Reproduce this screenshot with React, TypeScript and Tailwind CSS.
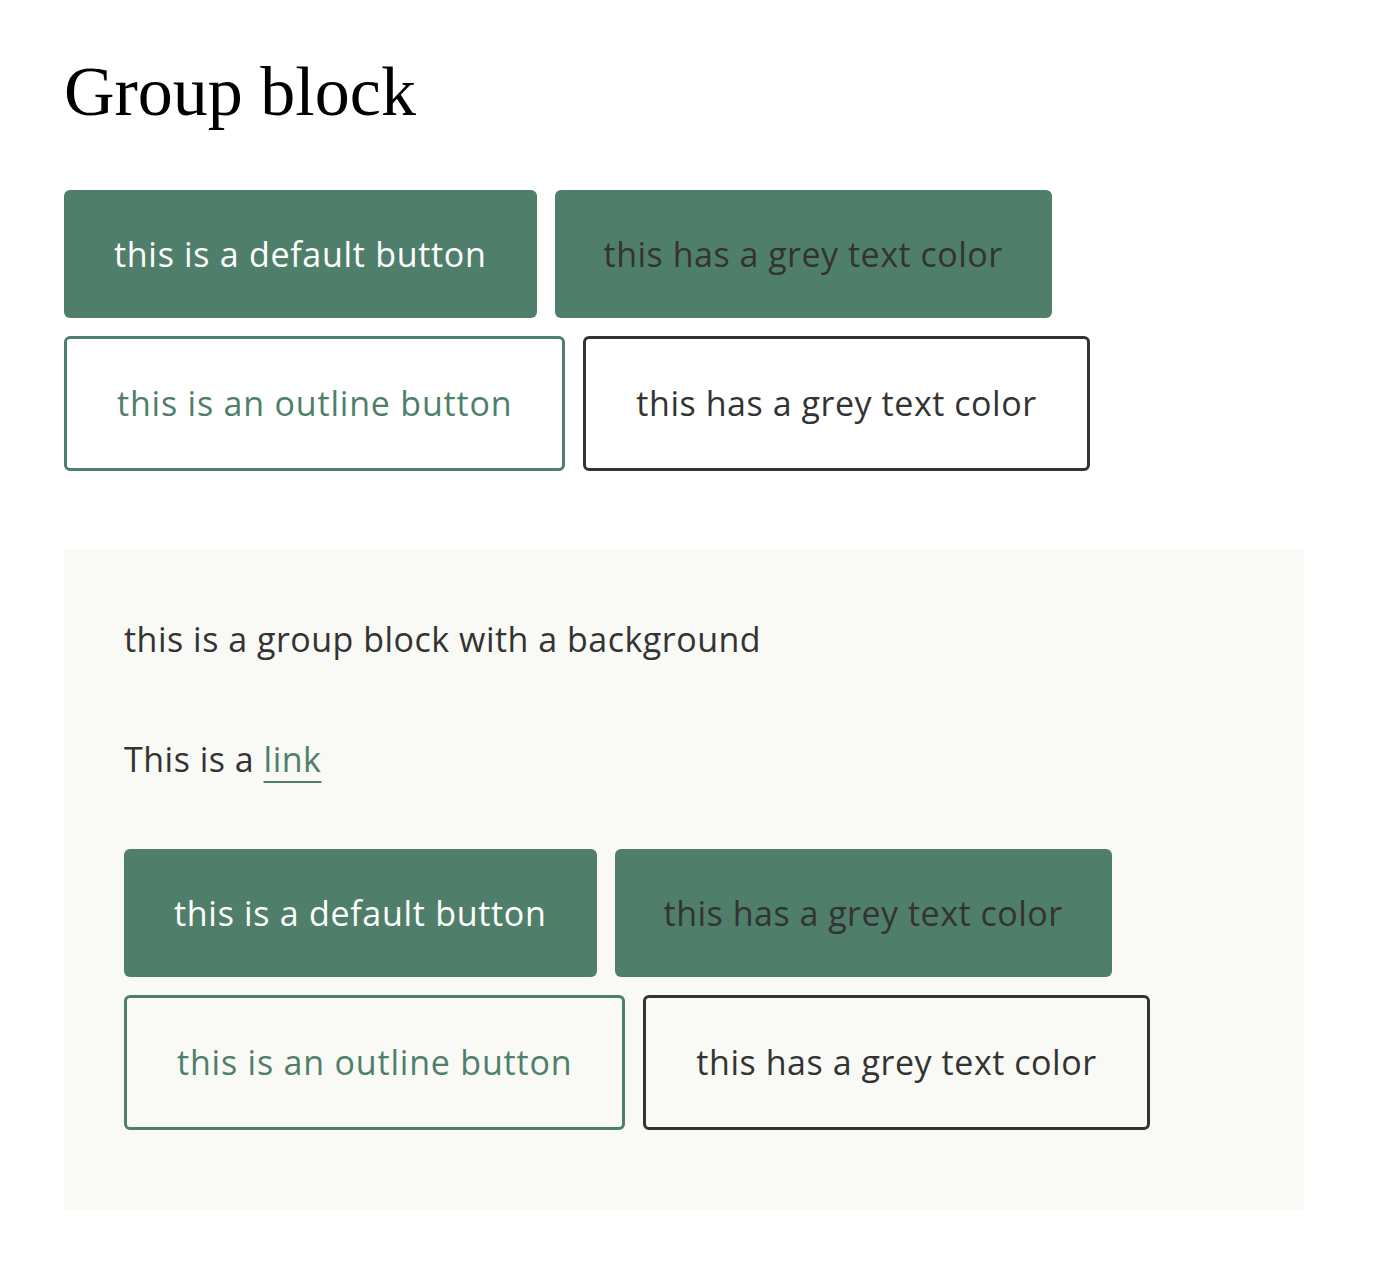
import React from "react";

const sans = { fontFamily: '"Open Sans", "Noto Sans", sans-serif' };

function Buttons() {
  return (
    <div className="flex flex-col gap-[18px]">
      <div className="flex gap-[18px]">
        <a className="rounded-[6px] bg-[#4f7f6a] px-[50px] py-[35px] text-[34px] leading-[58px] tracking-[0.7px] text-white">
          this is a default button
        </a>
        <a className="rounded-[6px] bg-[#4f7f6a] px-[49px] py-[35px] text-[34px] leading-[58px] tracking-[0.5px] text-[#333333]">
          this has a grey text color
        </a>
      </div>
      <div className="flex gap-[18px]">
        <a className="rounded-[6px] border-[3px] border-[#4f7f6a] px-[50px] py-[35px] text-[34px] leading-[59px] tracking-[0.8px] text-[#4f7f6a]">
          this is an outline button
        </a>
        <a className="rounded-[6px] border-[3px] border-[#333333] px-[50px] py-[35px] text-[34px] leading-[59px] tracking-[0.55px] text-[#333333]">
          this has a grey text color
        </a>
      </div>
    </div>
  );
}

export default function App() {
  return (
    <div className="min-h-[1270px] bg-white px-[64px] pt-[50px]" style={sans}>
      <h1
        className="text-[70px] font-normal leading-[84px] text-black"
        style={{ fontFamily: '"Liberation Serif", "Times New Roman", serif' }}
      >
        Group block
      </h1>
      <div className="mt-[56px]">
        <Buttons />
      </div>
      <div className="mt-[78px] w-[1240px] bg-[#f9f9f5] px-[60px] pt-[61px] pb-[80px]">
        <p className="text-[34px] leading-[58px] tracking-[0.5px] text-[#333333]">
          this is a group block with a background
        </p>
        <p className="mt-[62px] text-[34px] leading-[58px] tracking-[0.5px] text-[#333333]">
          This is a{" "}
          <a className="text-[#4f7f6a] underline decoration-[2px] underline-offset-[9px]">link</a>
        </p>
        <div className="mt-[61px]">
          <Buttons />
        </div>
      </div>
    </div>
  );
}
